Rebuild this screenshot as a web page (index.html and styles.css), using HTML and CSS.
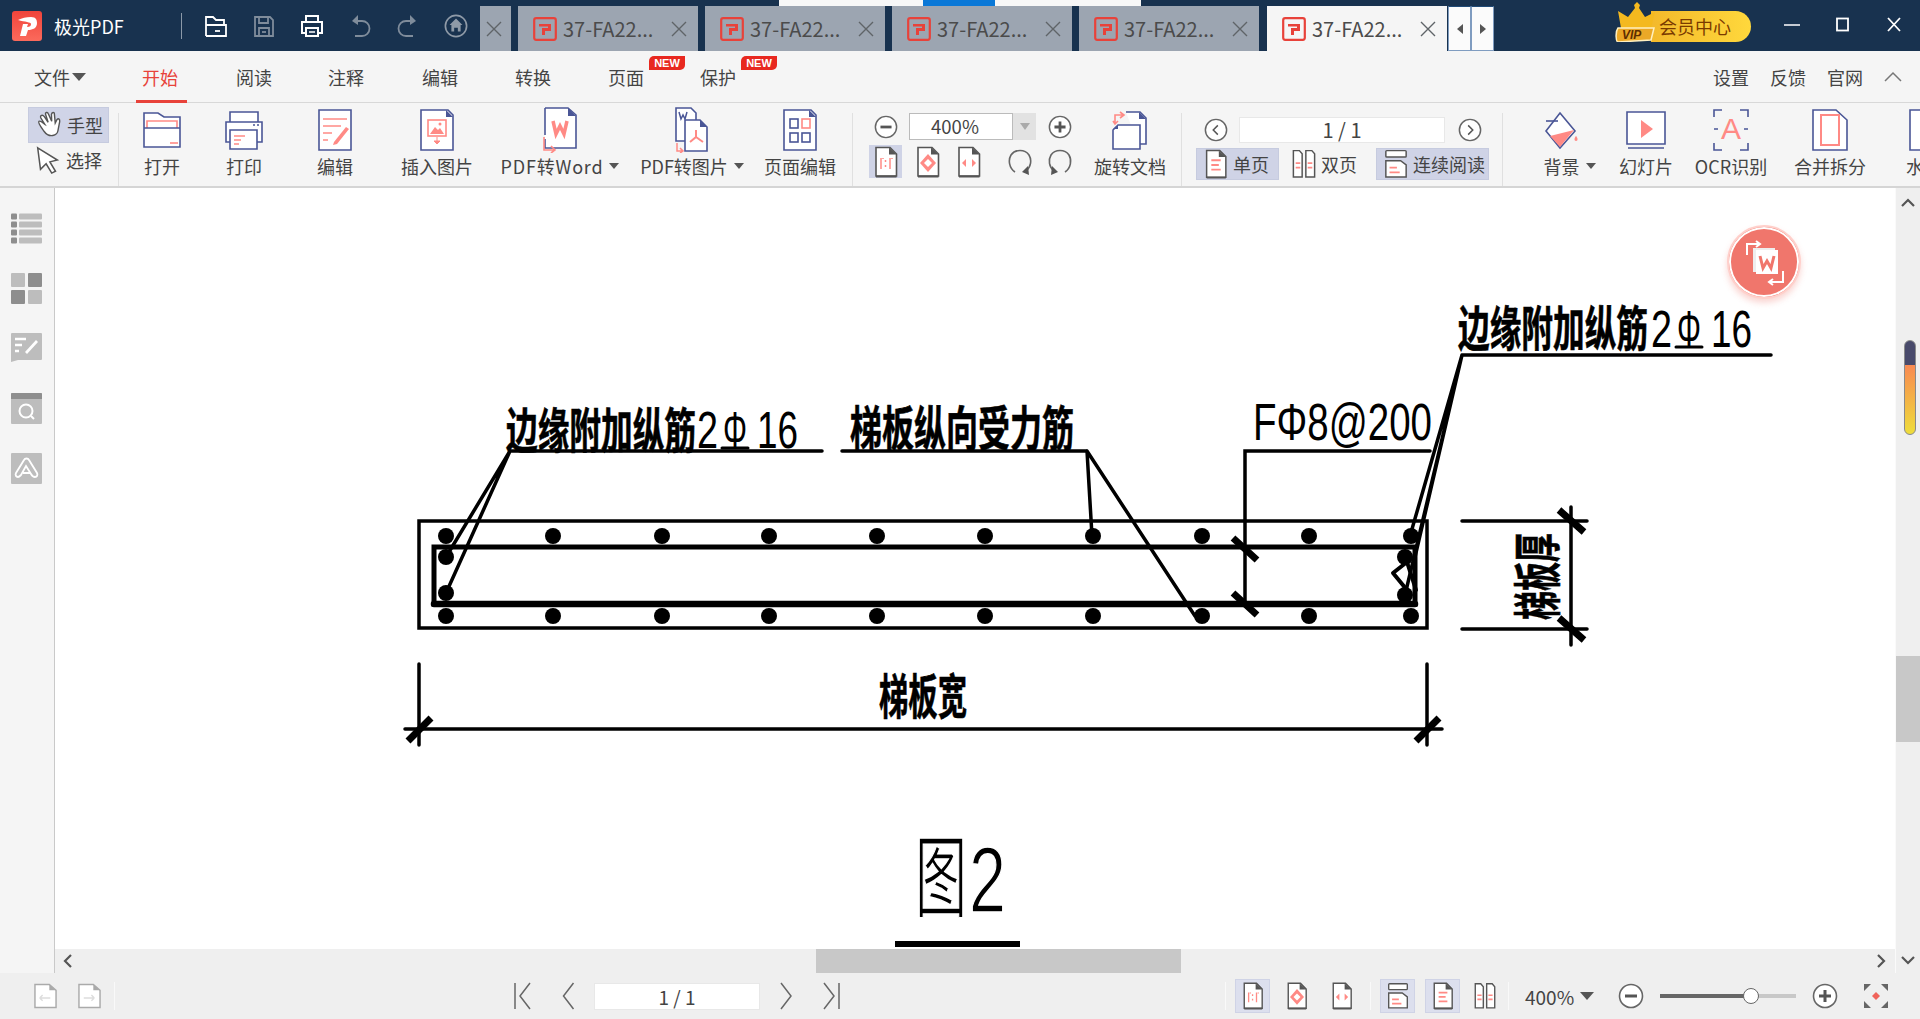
FILE: index.html
```html
<!DOCTYPE html>
<html lang="zh-CN">
<head>
<meta charset="utf-8">
<title>极光PDF</title>
<link rel="stylesheet" href="styles.css">
</head>
<body>
<svg class="defs" width="0" height="0" aria-hidden="true">
  <defs>
    <symbol id="tabicon" viewBox="0 0 24 24"><rect x="1.200" y="1.200" width="21.600" height="21.600" rx="2" fill="none" stroke="#e8423a" stroke-width="2.200"/><path d="M6 7h12v7h-6v4H9v-7h6V9.500H6z" fill="#e8423a"/></symbol>
    <symbol id="x" viewBox="0 0 16 16"><path d="M1 1l14 14M15 1L1 15" stroke="#5f6468" stroke-width="1.400" fill="none"/></symbol>
    <symbol id="pg" viewBox="0 0 24 32"><path d="M2 1.500H16L22.500 8V30H2z" fill="#fff" stroke="#555" stroke-width="1.600"/><path d="M15 1.500L22.500 8.500H15z" fill="#555"/><path d="M2 30.500H22.500" stroke="#555" stroke-width="2"/></symbol>
    <symbol id="minus" viewBox="0 0 26 26"><circle cx="13" cy="13" r="11.500" fill="#fff" stroke="#666" stroke-width="1.600"/><path d="M7 13H19" stroke="#555" stroke-width="3"/></symbol>
    <symbol id="plus" viewBox="0 0 26 26"><circle cx="13" cy="13" r="11.500" fill="#fff" stroke="#666" stroke-width="1.600"/><path d="M7 13H19M13 7V19" stroke="#555" stroke-width="3"/></symbol>
    <symbol id="one" viewBox="0 0 24 32"><use href="#pg" width="24" height="32"/><path d="M7 12V23M9 12v1M16 12V23M18 12v1" stroke="#ff8a85" stroke-width="1.500"/><path d="M11.500 14v2M11.500 19v2" stroke="#ff8a85" stroke-width="1.500"/></symbol>
    <symbol id="fitp" viewBox="0 0 24 32"><use href="#pg" width="24" height="32"/><path d="M12 8l8 9-8 9-8-9z" fill="#ff8a85"/><path d="M12 13l4 4-4 4-4-4z" fill="#fff"/></symbol>
    <symbol id="fitw" viewBox="0 0 24 32"><use href="#pg" width="24" height="32"/><path d="M5 17l4-4v8zM19 17l-4-4v8z" fill="#ff8a85"/></symbol>
    <symbol id="single" viewBox="0 0 24 32"><use href="#pg" width="24" height="32"/><path d="M7 12H17M7 17H15M7 22H17" stroke="#ff8a85" stroke-width="2"/></symbol>
    <symbol id="double" viewBox="0 0 26 32"><path d="M1.500 1.500H8L11 5V30H1.500zM15 1.500H21.500L24.500 5V30H15z" fill="#fff" stroke="#555" stroke-width="1.600"/><path d="M4 15H9M4 20H9M17 15H22M17 20H22" stroke="#ff8a85" stroke-width="1.800"/></symbol>
    <symbol id="cont" viewBox="0 0 26 32"><rect x="2" y="1.500" width="22" height="7" rx="1" fill="#fff" stroke="#555" stroke-width="1.600"/><path d="M2 12.500H18L24 17V30H2z" fill="#fff" stroke="#555" stroke-width="1.600"/><path d="M6 20H14M6 25H17" stroke="#ff8a85" stroke-width="2"/></symbol>
    <symbol id="chev-l" viewBox="0 0 14 30"><path d="M12 2L2 15l10 13" fill="none" stroke="#666" stroke-width="1.500"/></symbol>
    <symbol id="chev-r" viewBox="0 0 14 30"><path d="M2 2l10 13L2 28" fill="none" stroke="#666" stroke-width="1.500"/></symbol>
  </defs>
</svg>

<header class="titlebar">
  <div class="brand">
    <svg class="logo" viewBox="0 0 30 30"><defs><linearGradient id="lg" x1="0" y1="0" x2="0" y2="1"><stop offset="0" stop-color="#f0443b"/><stop offset="1" stop-color="#fb6a5c"/></linearGradient></defs><rect width="30" height="30" rx="3" fill="url(#lg)"/><path d="M6 9c4-2 8-3 13-3 5 0 6 3 6 6 0 5-4 7-9 7l-2 6H8l3-12h5l-1 3c3 0 4-1 4-3 0-2-6-2-13-4z" fill="#fff"/></svg>
    <span class="appname">极光PDF</span>
    <span class="qsep"></span>
    <div class="quick">
      <svg viewBox="0 0 24 24"><path d="M2 22V3h7l3 3h8v5M2 22h20V11H2" fill="none" stroke="#fff" stroke-width="1.800"/><path d="M11 17h5" stroke="#fff" stroke-width="1.800"/></svg>
      <svg viewBox="0 0 24 24"><path d="M3 3h15l3 3v16H3zM7 3v6h9V3M7 22v-8h10v8" fill="none" stroke="#7f8c9b" stroke-width="1.800"/><path d="M10 18h4" stroke="#7f8c9b" stroke-width="1.800"/></svg>
      <svg viewBox="0 0 24 24"><path d="M6 7V2h12v5M6 19H2V8h20v11h-4M6 14h12v8H6z" fill="none" stroke="#fff" stroke-width="2"/><path d="M9 18h6" stroke="#fff" stroke-width="1.500"/></svg>
      <svg viewBox="0 0 24 24"><path d="M8 7h6a7 7 0 0 1 0 15H7" fill="none" stroke="#7f8c9b" stroke-width="1.800"/><path d="M10 1L4 7l6 4z" fill="#7f8c9b"/></svg>
      <svg viewBox="0 0 24 24"><path d="M16 7h-6a7 7 0 0 0 0 15h7" fill="none" stroke="#7f8c9b" stroke-width="1.800"/><path d="M14 1l6 6-6 4z" fill="#7f8c9b"/></svg>
      <svg viewBox="0 0 26 26"><circle cx="13" cy="13" r="11.500" fill="none" stroke="#8f9aa7" stroke-width="1.800"/><path d="M13 5l7 7h-2v7h-3v-4h-4v4H8v-7H6z" fill="#8f9aa7"/></svg>
    </div>
  </div>
  <div class="tabs">
    <div class="tab stub"><svg class="tabx"><use href="#x"/></svg></div>
    <div class="tab"><svg class="tabico"><use href="#tabicon"/></svg><span class="tabname">37-FA22...</span><svg class="tabx"><use href="#x"/></svg></div>
    <div class="tab"><svg class="tabico"><use href="#tabicon"/></svg><span class="tabname">37-FA22...</span><svg class="tabx"><use href="#x"/></svg></div>
    <div class="tab"><svg class="tabico"><use href="#tabicon"/></svg><span class="tabname">37-FA22...</span><svg class="tabx"><use href="#x"/></svg></div>
    <div class="tab"><svg class="tabico"><use href="#tabicon"/></svg><span class="tabname">37-FA22...</span><svg class="tabx"><use href="#x"/></svg></div>
    <div class="tab active"><svg class="tabico"><use href="#tabicon"/></svg><span class="tabname">37-FA22...</span><svg class="tabx"><use href="#x"/></svg></div>
    <div class="tabnav"><span class="tn"><i class="tri-l"></i></span><span class="tn"><i class="tri-r"></i></span></div>
  </div>
  <div class="vip">
    <svg class="crown" viewBox="0 0 42 40"><path d="M6 26L3 9l10 6 7-9-1-3 3-3 3 3-1 3 6 9 10-5-4 16z" fill="#f4b91f"/><path d="M3 26H39L36 38 3 40C1 40 0 30 3 26z" fill="#eba827" stroke="#fff0c0" stroke-width="1.500"/><text x="7" y="37" class="viptext">VIP</text></svg>
    <span class="vippill">会员中心</span>
  </div>
  <div class="winctl">
    <svg viewBox="0 0 16 16"><path d="M0 8H16" stroke="#fff" stroke-width="1.500"/></svg>
    <svg viewBox="0 0 16 16"><rect x="2" y="1.500" width="11" height="12" fill="none" stroke="#fff" stroke-width="1.800"/></svg>
    <svg viewBox="0 0 16 16"><path d="M2 1l12 13M14 1L2 14" stroke="#fff" stroke-width="1.800"/></svg>
  </div>
  <div class="topstrip"><i class="topstrip-blue"></i></div>
</header>

<nav class="menubar">
  <div class="menu">
    <span class="mi"><span>文件</span><i class="tri-d"></i></span>
    <span class="mi on"><span>开始</span></span>
    <span class="mi">阅读</span>
    <span class="mi">注释</span>
    <span class="mi">编辑</span>
    <span class="mi">转换</span>
    <span class="mi">页面<b class="new">NEW</b></span>
    <span class="mi">保护<b class="new">NEW</b></span>
  </div>
  <div class="menuright">
    <span>设置</span><span>反馈</span><span>官网</span>
    <svg class="collapse" viewBox="0 0 20 12"><path d="M2 10l8-8 8 8" fill="none" stroke="#777" stroke-width="1.500"/></svg>
  </div>
</nav>

<section class="toolbar">
  <div class="handcol">
    <div class="hrow sel">
      <svg viewBox="0 0 28 32"><path transform="rotate(-18 14 16)" d="M7 21C5 15 3 10 5 9c2-1 4 4 5 5L8 6c0-3 3-3 4 0l2 7V4c0-2 3-2 3 0l1 9 2-7c1-2 4-2 3 1l-2 9 3-3c2-1 3 1 2 3l-5 9c-2 4-11 5-14-4z" fill="#fff" stroke="#555" stroke-width="1.500"/></svg>
      <span>手型</span>
    </div>
    <div class="hrow">
      <svg viewBox="0 0 28 32"><path d="M3 3l21 13-8 2 6 10-4 2-6-10-6 6z" fill="#fff" stroke="#555" stroke-width="1.600"/></svg>
      <span>选择</span>
    </div>
  </div>
  <i class="sep s1"></i>
  <div class="col w86"><div class="ico">
    <svg width="38" height="36" viewBox="0 0 38 36"><path d="M1 35V1H15L21 5H37V35Z" fill="#fff" stroke="#4a5696" stroke-width="1.600"/><path d="M4 16V9H34V16" fill="none" stroke="#ff8a85" stroke-width="1.600"/><path d="M1 16H37" stroke="#4a5696" stroke-width="1.600"/><path d="M27 31H35" stroke="#ff8a85" stroke-width="1.600"/></svg>
  </div><span class="lb">打开</span></div>
  <div class="col w78"><div class="ico">
    <svg width="38" height="40" viewBox="0 0 38 40"><path d="M5 12V2H33V12" fill="#fff" stroke="#4a5696" stroke-width="1.600"/><path d="M1 12H37V32H1Z" fill="#fff" stroke="#4a5696" stroke-width="1.600"/><path d="M28 15h2M32 15h2" stroke="#4a5696" stroke-width="1.500"/><path d="M5 20H32V39H5Z" fill="#fff" stroke="#4a5696" stroke-width="1.600"/><path d="M9 26H20M9 30H16M9 34H14" stroke="#ff8a85" stroke-width="1.600"/></svg>
  </div><span class="lb">打印</span></div>
  <div class="col w104"><div class="ico">
    <svg width="34" height="42" viewBox="0 0 34 42"><path d="M1 1H33V41H1Z" fill="#fff" stroke="#4a5696" stroke-width="1.600"/><path d="M5 10H29M5 17H23M5 24H14M5 31H10" stroke="#ff8a85" stroke-width="1.600"/><path d="M16 33l12-15 3 2-12 15-4 1z" fill="#ff8a85"/></svg>
  </div><span class="lb">编辑</span></div>
  <div class="col w100"><div class="ico">
    <svg width="34" height="42" viewBox="0 0 34 42"><path d="M1 1H28L33 6V41H1Z" fill="#fff" stroke="#4a5696" stroke-width="1.600"/><path d="M26 1L33 8H26Z" fill="#4a5696"/><rect x="8" y="11" width="18" height="16" fill="#fff" stroke="#ff8a85" stroke-width="1.600"/><path d="M10 25l5-7 3 3 2-2 4 6z" fill="#ff8a85"/><circle cx="20" cy="15" r="1.500" fill="#ff8a85"/><path d="M17 28v4M14 32h6l-3 3z" fill="#ff8a85" stroke="#ff8a85"/></svg>
  </div><span class="lb">插入图片</span></div>
  <div class="col w146"><div class="ico">
    <svg width="36" height="46" viewBox="0 0 36 46"><path d="M3 1H26L34 8V41H3V32" fill="#fff" stroke="#4a5696" stroke-width="1.600"/><path d="M26 1L34 9H26Z" fill="#4a5696"/><path d="M3 1V28" stroke="#4a5696" stroke-width="1.600"/><path d="M11 14l3 13 4-8 4 8 3-13" fill="none" stroke="#ff8a85" stroke-width="3.500"/><path d="M2 30V43H12M9 39l4 4-4 3" fill="none" stroke="#ff8a85" stroke-width="1.600"/></svg>
  </div><span class="lb wide">PDF转Word<i class="tri-s"></i></span></div>
  <div class="col w118"><div class="ico">
    <svg width="34" height="46" viewBox="0 0 34 46"><path d="M1 1H16L21 6V34H1Z" fill="#fff" stroke="#4a5696" stroke-width="1.600"/><path d="M4 5l2 7 2-4 2 4 2-7" fill="none" stroke="#4a5696" stroke-width="1.500"/><path d="M10 13H25L32 20V44H10Z" fill="#fff" stroke="#4a5696" stroke-width="1.600"/><path d="M25 13L32 20H25Z" fill="#4a5696"/><path d="M21 23v7l-6 5M21 30l7 5" fill="none" stroke="#ff8a85" stroke-width="2"/><path d="M2 36V44H7M5 41l3 3-3 2" fill="none" stroke="#ff8a85" stroke-width="1.500"/></svg>
  </div><span class="lb">PDF转图片<i class="tri-s"></i></span></div>
  <div class="col w98"><div class="ico">
    <svg width="34" height="42" viewBox="0 0 34 42"><path d="M1 1H28L33 6V41H1Z" fill="#fff" stroke="#4a5696" stroke-width="1.600"/><path d="M26 1L33 8H26Z" fill="#4a5696"/><rect x="7" y="10" width="8" height="9" fill="none" stroke="#4a5696" stroke-width="1.600"/><rect x="19" y="10" width="8" height="9" fill="none" stroke="#ff8a85" stroke-width="1.600"/><rect x="7" y="24" width="8" height="9" fill="none" stroke="#4a5696" stroke-width="1.600"/><rect x="19" y="24" width="8" height="9" fill="none" stroke="#4a5696" stroke-width="1.600"/></svg>
  </div><span class="lb">页面编辑</span></div>
  <i class="sep s2"></i>

  <div class="zoomgroup">
    <div class="zr1">
      <svg class="c24"><use href="#minus"/></svg>
      <div class="zoombox"><span class="zval">400%</span><span class="zdrop"><i class="tri-z"></i></span></div>
      <svg class="c24 plusz"><use href="#plus"/></svg>
    </div>
    <div class="zr2">
      <span class="cell on"><svg class="p22"><use href="#one"/></svg></span>
      <span class="cell m9"><svg class="p22"><use href="#fitp"/></svg></span>
      <span class="cell m8"><svg class="p22"><use href="#fitw"/></svg></span>
      <span class="cell m18"><svg class="rot" viewBox="0 0 26 32"><path d="M8 26C2 22 1 14 4 9c4-6 14-6 18 0 3 5 2 12-3 16" fill="none" stroke="#666" stroke-width="1.600"/><path d="M21 20l1 9-7-3z" fill="#555"/></svg></span>
      <span class="cell m7"><svg class="rot" viewBox="0 0 26 32"><path d="M18 26c6-4 7-12 4-17C18 3 8 3 4 9c-3 5-2 12 3 16" fill="none" stroke="#666" stroke-width="1.600"/><path d="M5 20l-1 9 7-3z" fill="#555"/></svg></span>
    </div>
  </div>
  <div class="col w86"><div class="ico">
    <svg width="36" height="40" viewBox="0 0 36 40"><path d="M14 2H28L34 8V34H26" fill="#fff" stroke="#4a5696" stroke-width="1.600"/><path d="M27 2L34 9H27Z" fill="#4a5696"/><path d="M1 20L6 15H28V39H1Z" fill="#fff" stroke="#4a5696" stroke-width="1.600"/><path d="M1 19L6 15V19Z" fill="#4a5696"/><path d="M3 13V5H11M8 2l4 3-4 3M1 11l2 3 3-3" fill="none" stroke="#ff8a85" stroke-width="1.600"/></svg>
  </div><span class="lb">旋转文档</span></div>
  <i class="sep s3"></i>

  <div class="navgroup">
    <div class="nr1">
      <svg class="c24" viewBox="0 0 26 26"><circle cx="13" cy="13" r="11.500" fill="#fff" stroke="#666" stroke-width="1.600"/><path d="M15 8l-5 5 5 5" fill="none" stroke="#555" stroke-width="1.600"/></svg>
      <span class="pageinput">1 / 1</span>
      <svg class="c24 m13" viewBox="0 0 26 26"><circle cx="13" cy="13" r="11.500" fill="#fff" stroke="#666" stroke-width="1.600"/><path d="M11 8l5 5-5 5" fill="none" stroke="#555" stroke-width="1.600"/></svg>
    </div>
    <div class="nr2">
      <span class="vbtn on w83"><svg class="p22b"><use href="#single"/></svg><span>单页</span></span>
      <span class="vbtn w97"><svg class="p22b"><use href="#double"/></svg><span>双页</span></span>
      <span class="vbtn on w113"><svg class="p22b"><use href="#cont"/></svg><span>连续阅读</span></span>
    </div>
  </div>
  <i class="sep s4"></i>

  <div class="col w116"><div class="ico">
    <svg width="36" height="40" viewBox="0 0 36 40"><path d="M17 3L32 21 17 38 3 21Z" fill="#fff" stroke="#4a5696" stroke-width="1.600"/><path d="M7 26L31 20 17 37Z" fill="#ff8a85"/><path d="M3 11H15" stroke="#4a5696" stroke-width="1.600"/><path d="M33 26c2 2 2 5 0 5s-2-3 0-5z" fill="#ff8a85"/></svg>
  </div><span class="lb ind">背景<i class="tri-s"></i></span></div>
  <div class="col w54"><div class="ico">
    <svg width="40" height="38" viewBox="0 0 40 38"><path d="M1 1H39V33H1Z" fill="#fff" stroke="#4a5696" stroke-width="1.600"/><path d="M2 37H38" stroke="#4a5696" stroke-width="1.600"/><path d="M15 9l12 9-12 9z" fill="#ff8a85"/></svg>
  </div><span class="lb">幻灯片</span></div>
  <div class="col w116"><div class="ico">
    <svg width="36" height="42" viewBox="0 0 36 42"><path d="M1 8V1H9M27 1H35V8M35 34V41H27M9 41H1V34M1 20H5M31 20H35" fill="none" stroke="#4a5696" stroke-width="1.600"/><text x="18" y="30" class="ocr">A</text></svg>
  </div><span class="lb">OCR识别</span></div>
  <div class="col w82"><div class="ico">
    <svg width="36" height="42" viewBox="0 0 36 42"><path d="M1 1H24L35 11V41H1Z" fill="#fff" stroke="#4a5696" stroke-width="1.600"/><path d="M9 6H27V36H9Z" fill="#fff" fill-opacity=".4" stroke="#ff8a85" stroke-width="2"/></svg>
  </div><span class="lb">合并拆分</span></div>
  <div class="col w106"><div class="ico">
    <svg width="30" height="42" viewBox="0 0 30 42"><path d="M1 1H29V41H1Z" fill="#fff" stroke="#4a5696" stroke-width="1.600"/></svg>
  </div><span class="lb">水印</span></div>
</section>

<main class="work">
  <aside class="sidebar">
    <svg viewBox="0 0 31 30"><g fill="#8e8e8e"><rect y="0" width="6" height="6" rx="1"/><rect y="8" width="6" height="6" rx="1"/><rect y="16" width="6" height="6" rx="1"/><rect y="24" width="6" height="6" rx="1"/></g><g fill="#bdbdbd"><rect x="8" y="0" width="23" height="6" rx="1"/><rect x="8" y="8" width="23" height="6" rx="1"/><rect x="8" y="16" width="23" height="6" rx="1"/><rect x="8" y="24" width="23" height="6" rx="1"/></g></svg>
    <svg viewBox="0 0 31 31"><rect width="14" height="14" rx="1" fill="#bdbdbd"/><rect x="17" width="14" height="14" rx="1" fill="#8e8e8e"/><rect y="17" width="14" height="14" rx="1" fill="#8e8e8e"/><rect x="17" y="17" width="14" height="14" rx="1" fill="#bdbdbd"/></svg>
    <svg viewBox="0 0 31 31"><path d="M1 0H30a1 1 0 0 1 1 1V26a1 1 0 0 1-1 1H7L0 29V1a1 1 0 0 1 1-1z" fill="#bdbdbd"/><path d="M4 6H15M4 12H11M4 18H8" stroke="#fff" stroke-width="2.500"/><path d="M14 19L25 7l2 2-11 12z" fill="#fff"/></svg>
    <svg viewBox="0 0 31 31"><rect width="31" height="31" rx="1" fill="#bdbdbd"/><path d="M0 1a1 1 0 0 1 1-1H30a1 1 0 0 1 1 1V6H0z" fill="#8e8e8e"/><circle cx="15" cy="18" r="6.500" fill="none" stroke="#fff" stroke-width="2"/><path d="M20 23l3 3" stroke="#fff" stroke-width="2"/></svg>
    <svg viewBox="0 0 31 31"><rect width="31" height="31" rx="1" fill="#bdbdbd"/><path d="M7 24c-2 0-3-2-2-4l8-13c1-2 4-2 5 0l8 13c1 2 0 4-2 4s-3-1-4-3l-5-8-5 9c-1 1-2 2-3 2zM12 20h8" fill="none" stroke="#fff" stroke-width="1.800"/></svg>
  </aside>
  <div class="center">
    <div class="canvas">
      <svg class="drawing" viewBox="55 188 1840 761">
        <g class="ln">
          <rect x="419" y="521" width="1008" height="107" class="w35"/>
          <path d="M434 547H1415V604H434Z" class="w5"/>
          <path d="M434 604H1415" class="w65"/>
          <path d="M510 451H822M842 451H1087M510 451L446 557M510 451L446 593M1087 451L1092 536M1087 451L1195 616M1462 355H1771M1462 355L1410 536M1462 355L1415 557M1462 355L1405 595M1245 604V451H1430"/>
          <path d="M1462 521H1587M1462 629H1587M1571 507V645M405 729H1442M419 664V745M1427 664V745"/>
          <path class="tick" d="M1233 538L1257 560M1233 593L1257 615M1559 510L1584 532M1559 618L1584 640M408 741L431 718M1416 741L1439 718"/>
          <path d="M1393 573L1407 562 1416 590M1393 573L1407 590" class="w4"/>
          <path d="M895 944H1020" class="w6"/>
          <path d="M722 448H748M1676 347H1702" class="w3"/>
        </g>
        <g fill="#000">
          <circle cx="446" cy="536" r="8"/><circle cx="553" cy="536" r="8"/><circle cx="662" cy="536" r="8"/><circle cx="769" cy="536" r="8"/><circle cx="877" cy="536" r="8"/><circle cx="985" cy="536" r="8"/><circle cx="1093" cy="536" r="8"/><circle cx="1202" cy="536" r="8"/><circle cx="1309" cy="536" r="8"/><circle cx="1411" cy="536" r="8"/>
          <circle cx="446" cy="616" r="8"/><circle cx="553" cy="616" r="8"/><circle cx="662" cy="616" r="8"/><circle cx="769" cy="616" r="8"/><circle cx="877" cy="616" r="8"/><circle cx="985" cy="616" r="8"/><circle cx="1093" cy="616" r="8"/><circle cx="1202" cy="616" r="8"/><circle cx="1309" cy="616" r="8"/><circle cx="1411" cy="616" r="8"/>
          <circle cx="446" cy="557" r="8"/><circle cx="446" cy="593" r="8"/><circle cx="1405" cy="557" r="8"/><circle cx="1405" cy="595" r="8"/>
        </g>
        <text class="cad" x="506" y="448" textLength="190" lengthAdjust="spacingAndGlyphs">边缘附加纵筋</text>
        <text class="cadn" x="697" y="448" textLength="21" lengthAdjust="spacingAndGlyphs">2</text>
        <text class="cadn" x="723" y="448" textLength="24" lengthAdjust="spacingAndGlyphs">Φ</text>
        <text class="cadn" x="757" y="448" textLength="41" lengthAdjust="spacingAndGlyphs">16</text>
        <text class="cad" x="850" y="446" textLength="224" lengthAdjust="spacingAndGlyphs">梯板纵向受力筋</text>
        <text class="cadn big" x="1253" y="440" textLength="179" lengthAdjust="spacingAndGlyphs">FΦ8@200</text>
        <text class="cad" x="1458" y="346" textLength="190" lengthAdjust="spacingAndGlyphs">边缘附加纵筋</text>
        <text class="cadn" x="1651" y="347" textLength="21" lengthAdjust="spacingAndGlyphs">2</text>
        <text class="cadn" x="1677" y="347" textLength="24" lengthAdjust="spacingAndGlyphs">Φ</text>
        <text class="cadn" x="1711" y="347" textLength="41" lengthAdjust="spacingAndGlyphs">16</text>
        <text class="cad" x="879" y="714" textLength="88" lengthAdjust="spacingAndGlyphs">梯板宽</text>
        <text class="cad" transform="translate(1555 620) rotate(-90)" x="0" y="0" textLength="87" lengthAdjust="spacingAndGlyphs">梯板厚</text>
        <text class="fig" x="915" y="910" textLength="52" lengthAdjust="spacingAndGlyphs">图</text>
        <text class="fign" x="969" y="912" textLength="37" lengthAdjust="spacingAndGlyphs">2</text>
      </svg>
      <div class="bubble">
        <svg viewBox="0 0 66 66" width="66" height="66"><rect x="22" y="19" width="22" height="24" fill="#eee"/><rect x="25" y="21" width="22" height="24" fill="#fff"/><path d="M29 27l3 12 4-7 4 7 3-12" fill="none" stroke="#f0766c" stroke-width="3"/><path d="M16 26V15H28M25 12l4 3-4 3M52 42V53H39M42 50l-4 3 4 3" fill="none" stroke="#fff" stroke-width="2"/></svg>
      </div>
    </div>
    <div class="hscroll">
      <svg class="sc" viewBox="0 0 10 14"><path d="M8 1L2 7l6 6" fill="none" stroke="#555" stroke-width="2.200"/></svg>
      <i class="hthumb"></i>
      <svg class="sc" viewBox="0 0 10 14"><path d="M2 1l6 6-6 6" fill="none" stroke="#555" stroke-width="2.200"/></svg>
    </div>
  </div>
  <div class="vscroll">
    <svg class="vc" viewBox="0 0 14 10"><path d="M1 8l6-6 6 6" fill="none" stroke="#555" stroke-width="2.200"/></svg>
    <i class="vthumb"></i>
    <svg class="vc" viewBox="0 0 14 10"><path d="M1 2l6 6 6-6" fill="none" stroke="#555" stroke-width="2.200"/></svg>
    <i class="colorbar"></i>
  </div>
</main>

<footer class="status">
  <svg class="dim-page" viewBox="0 0 24 26"><path d="M1 1H16L23 7V25H1Z" fill="#fff" stroke="#aaa" stroke-width="1.500"/><path d="M16 1L23 7H16Z" fill="#aaa"/><path d="M6 15H17M6 15l3-3M6 15l3 3" fill="none" stroke="#ddd" stroke-width="1.500"/></svg>
  <svg class="dim-page ml21" viewBox="0 0 24 26"><path d="M1 1H16L23 7V25H1Z" fill="#fff" stroke="#aaa" stroke-width="1.500"/><path d="M16 1L23 7H16Z" fill="#aaa"/><path d="M6 15H17M17 15l-3-3M17 15l-3 3" fill="none" stroke="#ddd" stroke-width="1.500"/></svg>
  <i class="ssep ml13"></i>
  <svg class="nv w18 ml399" viewBox="0 0 18 30"><path d="M1 2V28" stroke="#666" stroke-width="1.500"/><path d="M16 2L6 15l10 13" fill="none" stroke="#666" stroke-width="1.500"/></svg>
  <svg class="nv w15 ml29"><use href="#chev-l"/></svg>
  <span class="spage ml18">1 / 1</span>
  <svg class="nv w14 ml19"><use href="#chev-r"/></svg>
  <svg class="nv w18 ml29" viewBox="0 0 18 30"><path d="M17 2V28" stroke="#666" stroke-width="1.500"/><path d="M2 2l10 13L2 28" fill="none" stroke="#666" stroke-width="1.500"/></svg>
  <i class="ssep ml385"></i>
  <span class="sbtn on ml9"><svg class="p22"><use href="#one"/></svg></span>
  <span class="sbtn ml9"><svg class="p22"><use href="#fitp"/></svg></span>
  <span class="sbtn ml10"><svg class="p22"><use href="#fitw"/></svg></span>
  <i class="ssep ml11"></i>
  <span class="sbtn on ml9"><svg class="p22"><use href="#cont"/></svg></span>
  <span class="sbtn on ml10"><svg class="p22"><use href="#single"/></svg></span>
  <span class="sbtn ml7"><svg class="p22"><use href="#double"/></svg></span>
  <i class="ssep ml6"></i>
  <span class="szoom ml16">400%</span><i class="tri-d2 ml7"></i>
  <svg class="c26 ml24"><use href="#minus"/></svg>
  <span class="slider ml16"><i class="sfill"></i><i class="sknob"></i></span>
  <svg class="c26 ml16"><use href="#plus"/></svg>
  <svg class="c26 ml25" viewBox="0 0 26 26"><path d="M1 1h7L1 8zM25 1h-7l7 7zM1 25h7l-7-7zM25 25h-7l7-7z" fill="#666"/><path d="M13 9l4 4-4 4-4-4z" fill="#f0635a"/></svg>
</footer>
</body>
</html>
```
FILE: styles.css
```css
* { box-sizing: border-box; }
html, body { margin: 0; height: 100%; }
body {
  width: 1920px; height: 1019px; overflow: hidden;
  display: flex; flex-direction: column;
  font-family: "Noto Sans CJK SC", "Liberation Sans", sans-serif;
  color: #444; background: #f5f5f5;
}
i { display: block; font-style: normal; flex-shrink: 0; }
svg { flex-shrink: 0; display: block; }
.defs { position: absolute; }

/* title bar */
.titlebar { position: relative; height: 51px; flex: none; display: flex; background: #18324f; }
.brand { width: 480px; flex: none; display: flex; align-items: center; }
.logo { width: 30px; height: 30px; margin-left: 12px; }
.appname { margin-left: 12px; width: 80px; color: #fff; font: 18px "Noto Sans CJK SC", sans-serif; white-space: nowrap; }
.qsep { width: 1px; height: 26px; margin-left: 47px; background: #8b99a8; }
.quick { display: flex; margin-left: 22px; gap: 24px; }
.quick svg { width: 24px; height: 24px; }
.tabs { display: flex; align-self: flex-end; gap: 7px; height: 45px; }
.tab { width: 180px; display: flex; align-items: center; background: #9ca5b1; padding-left: 15px; color: #4b4b4b; }
.tab.stub { width: 31px; padding-left: 6px; }
.tab.active { background: #f5f5f5; width: 180px; margin-left: 1px; }
.tabico { width: 24px; height: 24px; }
.tabname { margin-left: 6px; width: 108px; font: 20px "Noto Sans CJK SC", sans-serif; line-height: 24px; white-space: nowrap; }
.tabx { width: 16px; height: 16px; }
.tabnav { display: flex; margin-left: -6px; }
.tn { width: 23px; height: 45px; background: #fbfbfb; border: 1px solid #7f9cc0; border-top-color: #1f4a77; display: flex; align-items: center; justify-content: center; }
.tri-l { border: 5px solid transparent; border-right: 6px solid #555; border-left: 0; }
.tri-r { border: 5px solid transparent; border-left: 6px solid #555; border-right: 0; }
.vip { position: absolute; left: 1615px; top: 2px; width: 136px; height: 40px; display: flex; align-items: center; }
.crown { width: 42px; height: 40px; position: relative; z-index: 1; }
.viptext { font: italic 700 12px "Liberation Sans", sans-serif; fill: #5c2e00; }
.vippill { margin-left: -6px; width: 100px; height: 31px; margin-top: 8px; padding-left: 8px; background: linear-gradient(90deg, #f3b92b, #ffd83c); border-radius: 0 16px 16px 0; color: #7a3a00; font: 18px/30px "Noto Sans CJK SC", sans-serif; white-space: nowrap; }
.winctl { position: absolute; left: 1784px; top: 17px; display: flex; gap: 35px; }
.winctl svg { width: 16px; height: 16px; }
.topstrip { position: absolute; left: 779px; top: 0; width: 362px; height: 6px; background: #f7f7f7; }
.topstrip-blue { position: absolute; left: 144px; width: 72px; height: 6px; background: #0a78d7; }

/* menu */
.menubar { height: 52px; flex: none; display: flex; justify-content: space-between; align-items: center; padding: 0 17px 0 34px; background: #f5f5f5; border-bottom: 1px solid #d8d8d8; font-size: 18px; line-height: 26px; color: #444; }
.menu { display: grid; grid-template-columns: 108px 94px 92px 94px 93px 93px 92px 60px; }
.mi { position: relative; display: flex; align-items: center; white-space: nowrap; }
.mi.on { color: #e8423a; }
.mi.on::after { content: ""; position: absolute; left: -6px; width: 51px; top: 36px; height: 3px; background: #e8423a; }
.tri-d { margin-left: 2px; border: 7px solid transparent; border-top: 8px solid #555; border-bottom: 0; }
.new { position: absolute; left: 41px; top: -8px; width: 36px; height: 14px; background: #e8281f; color: #fff; border-radius: 5px 0 5px 0; font: 700 11px/14px "Liberation Sans", sans-serif; text-align: center; }
.menuright { display: flex; align-items: center; gap: 21px; }
.collapse { width: 20px; height: 12px; margin-left: -1px; }

/* toolbar */
.toolbar { height: 85px; flex: none; display: flex; padding-left: 28px; background: #f5f5f5; border-bottom: 2px solid #d5d5d5; overflow: hidden; font-size: 18px; }
.handcol { width: 81px; flex: none; padding-top: 4px; }
.hrow { display: flex; align-items: center; height: 36px; padding-left: 6px; gap: 4px; font-size: 18px; }
.hrow + .hrow { margin-top: 4px; height: 26px; }
.hrow svg { width: 28px; height: 30px; }
.hrow.sel { background: #d0d4e7; border: 1px solid #c6cbdf; }
.sep { width: 1px; height: 73px; margin-top: 10px; background: #e0e0e0; flex: none; }
.s1 { margin-left: 9px; } .s2 { margin-left: 3px; } .s3 { margin-left: 8px; } .s4 { margin-left: 13px; }
.col { flex: none; display: flex; flex-direction: column; align-items: center; padding-top: 5px; white-space: nowrap; }
.ico { height: 44px; display: flex; align-items: center; justify-content: center; }
.lb { margin-top: 2px; line-height: 24px; display: flex; align-items: center; }
.lb.wide { letter-spacing: .8px; }
.lb.ind { padding-left: 17px; }
.w54 { width: 54px; } .w78 { width: 78px; } .w82 { width: 82px; } .w86 { width: 86px; } .w98 { width: 98px; }
.w100 { width: 100px; } .w104 { width: 104px; } .w106 { width: 106px; } .w116 { width: 116px; } .w118 { width: 118px; } .w146 { width: 146px; }
.tri-s { margin-left: 6px; border: 5px solid transparent; border-top: 6px solid #555; border-bottom: 0; }
.ocr { font: 30px "Liberation Sans", sans-serif; fill: #ff8a85; text-anchor: middle; }

.zoomgroup { width: 218px; flex: none; margin-left: 16px; padding-top: 10px; }
.zr1 { display: flex; align-items: center; height: 27px; padding-left: 5px; gap: 11px; }
.c24 { width: 24px; height: 24px; }
.plusz { margin-left: 1px; }
.zoombox { display: flex; width: 127px; height: 27px; }
.zval { width: 104px; height: 27px; background: #fff; border: 1px solid #bbb; font-size: 18.500px; line-height: 25px; text-align: center; padding-right: 12px; }
.zdrop { width: 23px; background: #e2e2e2; display: flex; align-items: center; justify-content: center; }
.tri-z { border: 5px solid transparent; border-top: 7px solid #aaa; border-bottom: 0; }
.zr2 { display: flex; margin-top: 5px; }
.cell { width: 33px; height: 33px; display: flex; align-items: center; justify-content: center; }
.cell.on { background: #cfd3e6; }
.m7 { margin-left: 7px; } .m8 { margin-left: 8px; } .m9 { margin-left: 9px; } .m18 { margin-left: 18px; }
.m13 { margin-left: 13px; }
.p22 { width: 24px; height: 32px; }
.rot { width: 26px; height: 32px; }

.navgroup { width: 293px; flex: none; margin-left: 14px; padding-top: 13px; }
.nr1 { display: flex; align-items: center; height: 28px; padding-left: 8px; gap: 11px; }
.nr1 .m13 { margin-left: 2px; }
.pageinput { width: 206px; height: 26px; background: #fff; border: 1px solid #e8e8e8; font-size: 20px; line-height: 24px; text-align: center; }
.nr2 { display: flex; margin-top: 4px; height: 32px; }
.vbtn { display: flex; align-items: center; height: 32px; padding-left: 7px; gap: 5px; font-size: 18px; white-space: nowrap; }
.vbtn.on { background: #cfd3e6; border: 1px solid #c6cbdf; }
.w83 { width: 83px; } .w97 { width: 97px; padding-left: 13px; } .w113 { width: 113px; }
.p22b { width: 24px; height: 30px; }

/* work area */
.work { flex: 1; display: flex; min-height: 0; }
.sidebar { width: 55px; flex: none; display: flex; flex-direction: column; gap: 29px; padding: 25px 0 0 11px; background: #f5f5f5; border-right: 1px solid #c9c9c9; }
.sidebar svg { width: 31px; height: 31px; }
.center { flex: 1; min-width: 0; display: flex; flex-direction: column; }
.canvas { position: relative; flex: 1; background: #fff; overflow: hidden; }
.drawing { width: 100%; height: 100%; }
.ln { fill: none; stroke: #000; stroke-width: 3.500px; stroke-linecap: round; }
.w35 { stroke-width: 3.500px; }
.w5 { stroke-width: 5px; }
.w65 { stroke-width: 6.500px; }
.w3 { stroke-width: 3px; }
.w4 { stroke-width: 4px; }
.w6 { stroke-width: 6px; stroke-linecap: butt; }
.tick { stroke-width: 7px; stroke-linecap: butt; }
.cad { font: 700 48px "Noto Sans CJK SC", sans-serif; fill: #000; stroke: #000; stroke-width: .6px; }
.cadn { font: 52px "Liberation Sans", sans-serif; fill: #000; }
.cadn.big { font-size: 52px; }
.fig { font: 400 90px "Noto Sans CJK SC", sans-serif; fill: #000; stroke: #fff; stroke-width: 1.500px; }
.fign { font: 93px "Liberation Sans", sans-serif; fill: #000; stroke: #fff; stroke-width: 1.500px; }
.bubble { position: absolute; left: 1672px; top: 37px; width: 74px; height: 74px; padding: 4px; border-radius: 50%; background: #f0766c; border: 2px solid #ffd0cb; box-shadow: inset 0 0 0 2px #fff, 0 4px 6px rgba(240,118,108,.3); }
.bubble svg { margin: -2px; }
.hscroll { height: 24px; flex: none; display: flex; align-items: center; background: #efefef; }
.sc { width: 10px; height: 14px; margin: 0 8px; }
.hscroll .sc:first-child { margin-left: 8px; }
.hthumb { margin-left: 735px; width: 365px; height: 24px; background: #c8c8c8; margin-right: auto; }
.hscroll .sc:last-child { margin-right: 9px; }
.vscroll { position: relative; width: 25px; flex: none; display: flex; flex-direction: column; align-items: center; background: #efefef; padding-top: 10px; border-left: 1px solid #fafafa; }
.vc { width: 14px; height: 10px; }
.vthumb { width: 100%; height: 86px; margin-top: 448px; margin-bottom: auto; background: #c8c8c8; }
.vscroll .vc:last-of-type { margin-bottom: 8px; }
.colorbar { position: absolute; left: 8px; top: 152px; width: 12px; height: 95px; border-radius: 6px; border: 1px solid #8a8a8a; background: linear-gradient(#494a6b 0 26%, #f98a52 26%, #eedd3b 100%); }

/* status */
.status { height: 46px; flex: none; display: flex; align-items: center; padding-left: 34px; background: #efefef; }
.dim-page { width: 23px; height: 26px; }
.ssep { width: 1px; height: 28px; background: #f9f9f9; }
.nv { height: 30px; }
.w14 { width: 14px; } .w15 { width: 15px; } .w18 { width: 18px; }
.spage { width: 166px; height: 27px; background: #fff; border: 1px solid #e8e8e8; text-align: center; font-size: 19px; line-height: 25px; }
.sbtn { width: 35px; height: 34px; display: flex; align-items: center; justify-content: center; }
.sbtn.on { background: #dcdfee; border: 1px solid #cfd3e6; }
.sbtn .p22 { width: 22px; height: 28px; }
.szoom { width: 48px; font-size: 19px; white-space: nowrap; }
.tri-d2 { border: 7px solid transparent; border-top: 8px solid #555; border-bottom: 0; }
.c26 { width: 26px; height: 26px; }
.slider { position: relative; width: 136px; height: 4px; background: #c8c8c8; }
.sfill { width: 90px; height: 4px; background: #666; }
.sknob { position: absolute; left: 83px; top: -6px; width: 16px; height: 16px; border-radius: 50%; background: #fff; border: 1.500px solid #666; }
.ml6 { margin-left: 6px; } .ml7 { margin-left: 7px; } .ml9 { margin-left: 9px; } .ml10 { margin-left: 10px; } .ml11 { margin-left: 11px; } .ml13 { margin-left: 13px; }
.ml16 { margin-left: 16px; } .ml18 { margin-left: 18px; } .ml19 { margin-left: 19px; } .ml21 { margin-left: 21px; } .ml24 { margin-left: 24px; } .ml25 { margin-left: 25px; }
.ml29 { margin-left: 29px; } .ml385 { margin-left: 385px; } .ml399 { margin-left: 399px; }
```
